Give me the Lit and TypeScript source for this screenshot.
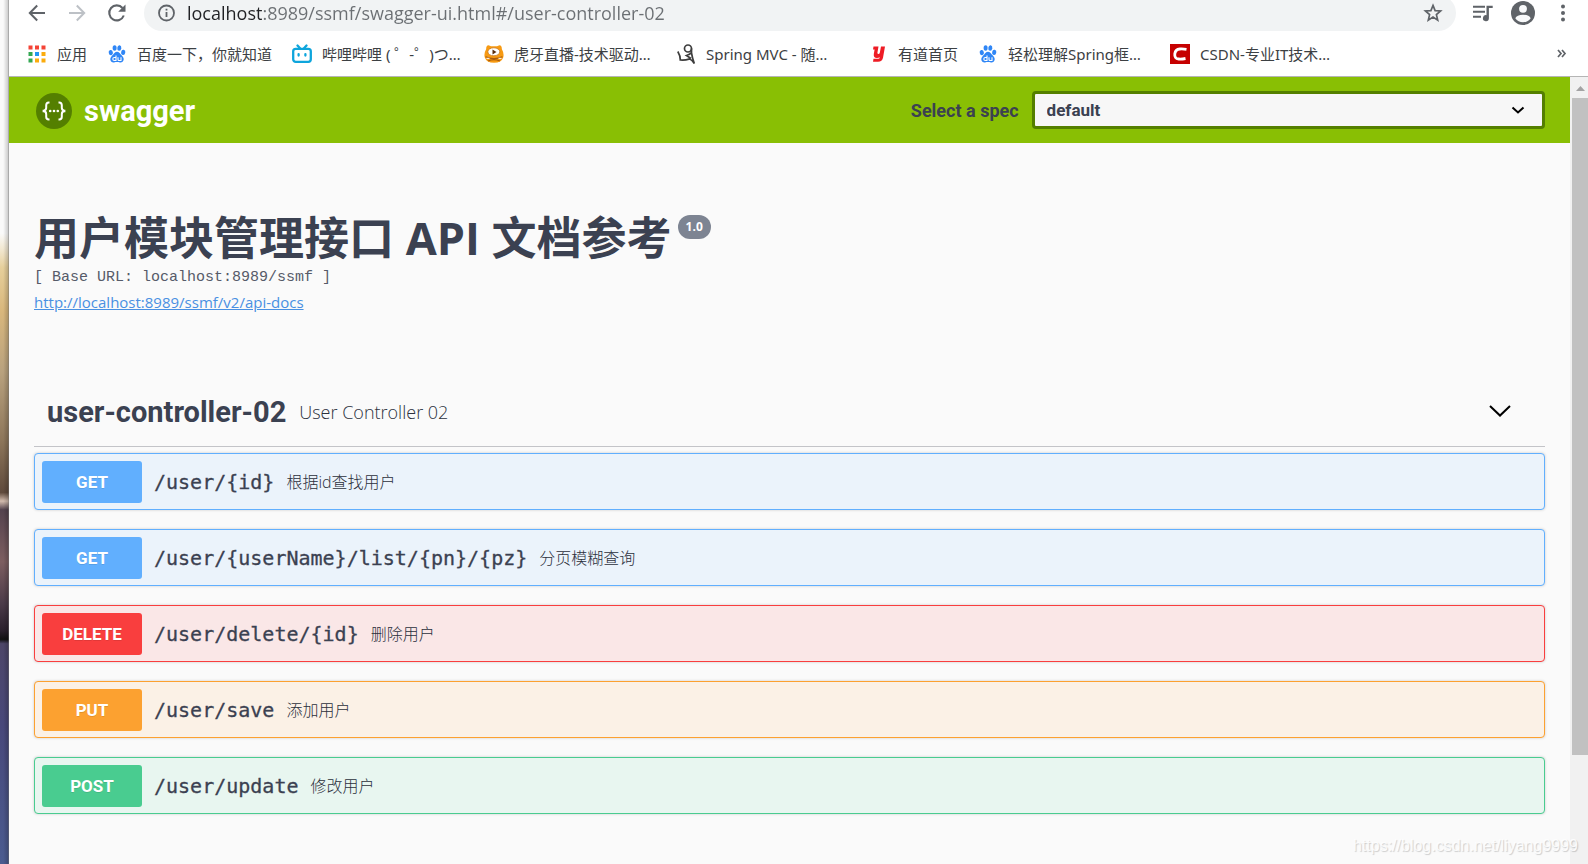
import { LitElement, html, css, svg } from "lit";
import { customElement, property } from "lit/decorators.js";
import { classMap } from "lit/directives/class-map.js";

interface Bookmark {
  label: string;
  icon: string;
  wide?: boolean;
}

interface Operation {
  method: string;
  path: string;
  summary: string;
}

const BOOKMARKS: Bookmark[] = [
  { label: "应用", icon: "apps" },
  { label: "百度一下，你就知道", icon: "baidu" },
  { label: "哔哩哔哩 ( ゜-゜)つ…", icon: "bilibili", wide: true },
  { label: "虎牙直播-技术驱动…", icon: "huya", wide: true },
  { label: "Spring MVC - 随…", icon: "spring", wide: true },
  { label: "有道首页", icon: "youdao" },
  { label: "轻松理解Spring框…", icon: "baidu", wide: true },
  { label: "CSDN-专业IT技术…", icon: "csdn", wide: true },
];

const OPERATIONS: Operation[] = [
  { method: "GET", path: "/user/{id}", summary: "根据id查找用户" },
  { method: "GET", path: "/user/{userName}/list/{pn}/{pz}", summary: "分页模糊查询" },
  { method: "DELETE", path: "/user/delete/{id}", summary: "删除用户" },
  { method: "PUT", path: "/user/save", summary: "添加用户" },
  { method: "POST", path: "/user/update", summary: "修改用户" },
];

const APP_COLORS = ["#f44336", "#f44336", "#f44336", "#34a853", "#2196f3", "#fbac0d", "#34a853", "#fbac0d", "#fbac0d"];

const GLYPHS: Record<string, unknown> = {
  apps: svg`${APP_COLORS.map(
    (c, i) => svg`<rect x=${1.5 + (i % 3) * 6.5} y=${1.5 + Math.floor(i / 3) * 6.5} width="4" height="4" fill=${c} />`
  )}`,
  baidu: svg`<g fill="#2f86f6">
      <ellipse cx="3.8" cy="8.6" rx="2.1" ry="2.7" transform="rotate(-12 3.8 8.6)" />
      <ellipse cx="7.6" cy="4" rx="2" ry="2.8" />
      <ellipse cx="12.3" cy="4" rx="2" ry="2.8" transform="rotate(8 12.3 4)" />
      <ellipse cx="16.2" cy="8.4" rx="2.1" ry="2.6" transform="rotate(12 16.2 8.4)" />
      <path d="M10 7.8c2 0 2.8 1.6 3.8 2.8 1.300 1.400 3.200 2.600 2.900 5-.3 2.200-2 3-3.700 2.800-1.200-.1-1.900-.3-3-.3s-1.800.200-3 .3c-1.700.200-3.500-.6-3.700-2.800-.2-2.400 1.700-3.600 2.900-5C7.200 9.400 8 7.800 10 7.800z" />
    </g>
    <path d="M9 11.500v5H7.300a1.500 1.500 0 0 1 0-3H9M11 13.200v2.300q0 1 1 1h2v-3.300" fill="none" stroke="#fff" stroke-width="1.100" />`,
  bilibili: svg`<g fill="none" stroke="#0ea5dc" stroke-width="2.300" stroke-linecap="round" stroke-linejoin="round">
      <rect x="1.200" y="4.800" width="17.600" height="13" rx="2.500" />
      <path d="M5.500 1.500 8 4.300M14.500 1.500 12 4.300" />
      <path d="M6.600 10.200v1.400M13.400 10.200v1.400" />
    </g>`,
  huya: svg`<path d="M2.200 5Q2 1.500 4.500 1.200L7 2.300h6l2.500-1.100Q18 1.500 17.800 5q2.600 4.500 1.400 8.500Q17.500 18.800 10 18.800T.8 13.500Q-.4 9.500 2.200 5z" fill="#f79a12" />
    <ellipse cx="9.800" cy="7.800" rx="6" ry="4" fill="#fff" stroke="#c8751a" stroke-width=".8" />
    <path d="m8.500 5.500 4 2.500-4 2.500z" fill="#5b2d0c" />
    <path d="M1.500 12.800q8.500 3.600 17 0M4 17q6-2.500 12 0" fill="none" stroke="#a85a0c" stroke-width="1.100" />
    <path d="M2.500 14.300h3M14.500 14.300h3" stroke="#fff" stroke-width="1" />`,
  spring: svg`<g fill="none" stroke="#3d3d3d" stroke-width="1.700">
      <circle cx="12" cy="4.500" r="3.500" />
      <path d="M15.500 4.500v4.500q.8 5 2.800 10.500-2-3-4.500-4.600-5.500 1.700-9.500 1.100Q4.500 12 1.800 7.500M15.500 8.500q-1.500 2-5 3l4.500 3" />
    </g>`,
  youdao: svg`<path d="M5.500 2.500h5l-1.100 6.300q0 1.200 1 1.200 1.100 0 1.400-1.200L13 2.500h4L15 13.800q-.8 4-5 4H5l.5-3.100h4.800q1.300 0 1.500-1.500-1 .8-2.900.8-3.600-.1-3.100-4L6.600 5.500H5z" fill="#ee1c25" />`,
  csdn: svg`<rect width="20" height="20" fill="#c60000" />
    <path d="M16.500 5.300Q13 4.800 9.800 5 5.400 5.400 4.800 9.800q-.6 4.800 3.900 5.200 3 .2 6.800-.5" fill="none" stroke="#fff" stroke-width="2.800" />`,
};

@customElement("bookmark-link")
class BookmarkLink extends LitElement {
  @property() label = "";
  @property() icon = "";

  static styles = css`
    :host { display: block; }
    .link {
      display: flex;
      align-items: center;
      gap: 10px;
      color: #3c4043;
      text-decoration: none;
      white-space: nowrap;
      font: 15px/20px "Noto Sans", "Noto Sans CJK SC", sans-serif;
    }
    .icon { width: 20px; height: 20px; flex: none; }
  `;

  render() {
    return html`<a class="link" href="#">
      <svg class="icon" viewBox="0 0 20 20" aria-hidden="true">${GLYPHS[this.icon]}</svg>
      <span>${this.label}</span>
    </a>`;
  }
}

@customElement("operation-row")
class OperationRow extends LitElement {
  @property() method = "";
  @property() path = "";
  @property() summary = "";

  static styles = css`
    :host { display: block; }
    .row {
      display: flex;
      align-items: center;
      gap: 12px;
      box-sizing: border-box;
      width: 100%;
      height: 57px;
      padding: 0 7px;
      border: 1px solid var(--tone);
      border-radius: 4px;
      background: var(--tint);
      box-shadow: 0 0 3px rgba(0, 0, 0, 0.19);
      color: #3b4151;
      text-align: left;
      cursor: pointer;
    }
    .get { --tone: #61affe; --tint: #ebf3fb; }
    .delete { --tone: #f93e3e; --tint: #fae7e7; }
    .put { --tone: #fca130; --tint: #fbf1e6; }
    .post { --tone: #49cc90; --tint: #e8f6f0; }
    .method {
      flex: none;
      width: 100px;
      border-radius: 3px;
      background: var(--tone);
      color: #fff;
      text-align: center;
      text-shadow: 0 1px 0 rgba(0, 0, 0, 0.1);
      font: 700 17px/42px Roboto, sans-serif;
    }
    .path { font: 20px/28px "DejaVu Sans Mono", monospace; -webkit-text-stroke: 0.3px; }
    .summary { color: #2b303c; font: 300 16px/24px "Open Sans", "Noto Sans CJK SC", sans-serif; }
  `;

  render() {
    const tone = { row: true, [this.method.toLowerCase()]: true };
    return html`<button class=${classMap(tone)} type="button">
      <span class="method">${this.method}</span>
      <span class="path">${this.path}</span>
      <span class="summary">${this.summary}</span>
    </button>`;
  }
}

@customElement("browser-chrome")
class BrowserChrome extends LitElement {
  static styles = css`
    :host { display: block; background: #fff; border-bottom: 1px solid #b5b5b5; }
    .toolbar {
      display: flex;
      align-items: center;
      height: 36px;
      margin-top: -5px;
      padding: 0 15px 0 18px;
    }
    .tool {
      display: flex;
      padding: 0;
      border: 0;
      background: none;
      color: #5f6368;
      cursor: pointer;
    }
    .nav { display: flex; gap: 20px; margin-right: 15px; }
    .dim { color: #bdc1c6; }
    .omnibox {
      display: flex;
      flex: 1;
      align-items: center;
      height: 36px;
      padding: 0 13px 0 12px;
      border-radius: 18px;
      background: #f1f3f4;
      color: #5f6368;
    }
    .address {
      flex: 1;
      min-width: 0;
      height: 28px;
      margin-left: 11px;
      padding: 0;
      border: 0;
      outline: 0;
      background: linear-gradient(90deg, #202124 76px, #6b6f73 76px);
      background-clip: text;
      -webkit-background-clip: text;
      color: transparent;
      font: 18px/28px "Open Sans", sans-serif;
    }
    .actions { display: flex; align-items: center; gap: 16px; margin-left: 15px; }
    .bookmarks {
      display: flex;
      align-items: center;
      gap: 20px;
      height: 45px;
      padding: 0 20px 0 18px;
    }
    .wide { width: 172px; }
    .more { margin-left: auto; }
  `;

  render() {
    return html`
      <div class="toolbar">
        <div class="nav">
          <button class="tool" aria-label="Back">
            <svg width="20" height="20" viewBox="0 0 20 20" fill="none" stroke="currentColor" stroke-width="2"><path d="M18 10H3M10.200 2.500 2.800 10l7.400 7.500" /></svg>
          </button>
          <button class="tool dim" aria-label="Forward">
            <svg width="20" height="20" viewBox="0 0 20 20" fill="none" stroke="currentColor" stroke-width="2"><path d="M2 10h15M9.800 2.500l7.400 7.500-7.400 7.500" /></svg>
          </button>
          <button class="tool" aria-label="Reload">
            <svg width="22" height="20" viewBox="0 0 22 20"><path d="M16.800 12.500A7.500 7.500 0 1 1 15.500 5" fill="none" stroke="currentColor" stroke-width="2.100" /><path d="M18.500 1.500v7.300h-7.300z" fill="currentColor" /></svg>
          </button>
        </div>
        <div class="omnibox">
          <svg width="20" height="20" viewBox="0 0 20 20"><circle cx="10.500" cy="10" r="7.500" fill="none" stroke="currentColor" stroke-width="1.800" /><path d="M9.600 9h1.800v5H9.600zM9.600 5.800h1.800v1.800H9.600z" fill="currentColor" /></svg>
          <input class="address" type="text" aria-label="Address" spellcheck="false" value="localhost:8989/ssmf/swagger-ui.html#/user-controller-02" />
          <button class="tool" aria-label="Bookmark this page">
            <svg width="20" height="20" viewBox="0 0 20 20"><path d="m10 2.400 2.100 5.200 5.500.4-4.200 3.600 1.300 5.500-4.700-3-4.700 3 1.300-5.500L2.400 8l5.500-.4z" fill="none" stroke="currentColor" stroke-width="1.700" /></svg>
          </button>
        </div>
        <div class="actions">
          <button class="tool" aria-label="Media controls">
            <svg width="24" height="20" viewBox="0 0 24 20"><path d="M2 3.800h12M2 8.800h12M2 13.800h8" stroke="currentColor" stroke-width="2" /><path d="M15.500 2.800h6.200v2.300h-3.800v10.100a3 3 0 1 1-2.400-3z" fill="currentColor" /></svg>
          </button>
          <button class="tool" aria-label="Profile">
            <svg width="24" height="24" viewBox="0 0 24 24"><circle cx="12" cy="12" r="12" fill="currentColor" /><circle cx="12" cy="7.800" r="3.900" fill="#f8f9fa" /><path d="M4.300 17.300q1.500-3.600 7.700-3.600t7.700 3.600a9.400 9.400 0 0 1-15.400 0z" fill="#f8f9fa" /></svg>
          </button>
          <button class="tool" aria-label="Menu">
            <svg width="22" height="20" viewBox="0 0 22 20" fill="currentColor"><circle cx="12" cy="3.500" r="2" /><circle cx="12" cy="10" r="2" /><circle cx="12" cy="16.500" r="2" /></svg>
          </button>
        </div>
      </div>
      <nav class="bookmarks" aria-label="Bookmarks">
        ${BOOKMARKS.map(
          (b) => html`<bookmark-link class=${classMap({ wide: !!b.wide })} .label=${b.label} .icon=${b.icon}></bookmark-link>`
        )}
        <button class="tool more" aria-label="More bookmarks">
          <svg width="12" height="10" viewBox="0 0 12 10" fill="none" stroke="currentColor" stroke-width="1.700"><path d="M2 1 5 4.500 2 8M6 1l3 3.500L6 8" /></svg>
        </button>
      </nav>
    `;
  }
}

@customElement("app-root")
class AppRoot extends LitElement {
  static styles = css`
    :host {
      display: grid;
      position: relative;
      grid-template-columns: 9px minmax(0, 1fr);
      height: 100vh;
      overflow: hidden;
      color: #3b4151;
      font-family: "Open Sans", "Noto Sans CJK SC", sans-serif;
    }
    .desktop {
      box-sizing: border-box;
      border-right: 1px solid rgba(90, 90, 90, 0.5);
      background:
        linear-gradient(90deg, transparent 40%, rgba(0, 0, 0, 0.18)),
        linear-gradient(#fafafa 0 27%, #f1e6cd 29%, #e6cf9b 31%, #d9b77c 36%, #b9a27e 43%, #8d765a 51%, #5f4a3c 57%,
          #d3bcae 58%, #54434e 59%, #7d5e60 65%, #4a3a48 70%, #2a202c 73%, #111 74%, #4d4668 74.500%, #48487a 84%, #4b5c90);
    }
    .window { display: flex; flex-direction: column; min-height: 0; }
    .viewport { display: flex; flex: 1; min-height: 0; }
    .page { flex: 1; min-width: 0; overflow: hidden; background: #fafafa; }
    .topbar {
      display: flex;
      align-items: center;
      height: 66px;
      padding: 2px 25px 0 26px;
      box-sizing: border-box;
      background: #89bf04;
    }
    .brand {
      display: flex;
      align-items: center;
      gap: 11px;
      margin-right: auto;
      color: #fff;
      text-decoration: none;
      font: 700 29px/36px Roboto, sans-serif;
    }
    .logo { width: 38px; height: 38px; }
    .speclabel { margin-right: 13px; font: 700 18px/24px Roboto, sans-serif; }
    .picker { display: grid; align-items: center; width: 34%; margin-bottom: 2px; }
    .picker > * { grid-area: 1 / 1; }
    .spec {
      appearance: none;
      box-sizing: border-box;
      width: 100%;
      height: 38px;
      padding: 0 40px 0 12px;
      border: 3px solid #547f00;
      border-radius: 4px;
      background: #f7f7f7;
      color: #3b4151;
      font: 700 17px/24px Roboto, sans-serif;
    }
    .caret { justify-self: end; margin-right: 20px; pointer-events: none; }
    .content { padding: 68px 25px 0; }
    .title {
      display: flex;
      align-items: flex-start;
      gap: 6px;
      margin: 0;
      font: 700 45px/54px "Open Sans", "Noto Sans CJK SC", sans-serif;
    }
    .version {
      margin-top: 4px;
      padding: 0 8px;
      border-radius: 12px;
      background: #7d8492;
      color: #fff;
      font: 700 12px/24px "Open Sans", sans-serif;
    }
    .base { margin: 0; color: #565b69; font: 15px/26px "Liberation Mono", monospace; }
    .docs { display: inline-block; color: #4990e2; font-size: 15px; line-height: 22px; }
    .tag {
      display: flex;
      align-items: center;
      gap: 13px;
      box-sizing: border-box;
      height: 70px;
      margin: 64px 0 6px;
      padding: 0 33px 0 13px;
      border-bottom: 1px solid #c3c4c8;
    }
    .tagname { margin: 0; font: 700 29px/36px Roboto, sans-serif; }
    .tagnote { margin: 0 auto 0 0; color: #2b303c; font-size: 18px; font-weight: 300; line-height: 24px; }
    .toggle { display: flex; padding: 0; border: 0; background: none; cursor: pointer; }
    .operations { display: flex; flex-direction: column; gap: 19px; }
    .scrollbar {
      display: flex;
      flex-direction: column;
      width: 16px;
      padding-left: 2px;
      background: #f1f1f1;
    }
    .arrow { height: 21px; flex: none; }
    .thumb { flex: 6; background: #c1c1c1; }
    .rest { flex: 1; }
    .watermark {
      position: absolute;
      right: 10px;
      bottom: 8px;
      color: rgba(255, 255, 255, 0.85);
      text-shadow: 1px 1px 1px rgba(0, 0, 0, 0.18);
      font: 16px/20px "Liberation Sans", sans-serif;
      pointer-events: none;
    }
  `;

  render() {
    return html`
      <div class="desktop"></div>
      <div class="window">
        <browser-chrome></browser-chrome>
        <div class="viewport">
          <main class="page">
            <header class="topbar">
              <a class="brand" href="#">
                <svg class="logo" viewBox="0 0 38 38" aria-hidden="true">
                  <circle cx="19" cy="19" r="18" fill="#547f00" />
                  <path d="M14.500 10.500h-.7q-2.600 0-2.600 2.800v2.500q0 2.700-2.600 2.900v.6q2.600.2 2.600 2.900v2.500q0 2.800 2.600 2.800h.7M23.500 10.500h.7q2.600 0 2.600 2.800v2.500q0 2.700 2.600 2.900v.6q-2.600.2-2.600 2.900v2.500q0 2.800-2.600 2.800h-.7" fill="none" stroke="#fff" stroke-width="2" />
                  <g fill="#fff"><circle cx="15.200" cy="19" r="1.300" /><circle cx="19" cy="19" r="1.300" /><circle cx="22.800" cy="19" r="1.300" /></g>
                </svg>
                <span>swagger</span>
              </a>
              <label class="speclabel" for="spec">Select a spec</label>
              <div class="picker">
                <select class="spec" id="spec"><option>default</option></select>
                <svg class="caret" width="14" height="10" viewBox="0 0 14 10" fill="none" stroke="#000" stroke-width="2"><path d="m1.500 2.500 5.500 5 5.500-5" /></svg>
              </div>
            </header>
            <div class="content">
              <h1 class="title"><span>用户模块管理接口 API 文档参考</span><small class="version">1.0</small></h1>
              <p class="base">[ Base URL: localhost:8989/ssmf ]</p>
              <a class="docs" href="#">http://localhost:8989/ssmf/v2/api-docs</a>
              <section>
                <div class="tag">
                  <h2 class="tagname">user-controller-02</h2>
                  <p class="tagnote">User Controller 02</p>
                  <button class="toggle" aria-label="Collapse section">
                    <svg width="24" height="14" viewBox="0 0 24 14" fill="none" stroke="#000" stroke-width="2"><path d="m2 1 10 9.500L22 1" /></svg>
                  </button>
                </div>
                <div class="operations">
                  ${OPERATIONS.map(
                    (o) => html`<operation-row .method=${o.method} .path=${o.path} .summary=${o.summary}></operation-row>`
                  )}
                </div>
              </section>
            </div>
          </main>
          <div class="scrollbar" aria-hidden="true">
            <svg class="arrow" viewBox="0 0 16 21"><path d="M4 14 8.500 9l4.500 5z" fill="#a3a3a3" /></svg>
            <div class="thumb"></div>
            <div class="rest"></div>
          </div>
        </div>
      </div>
      <div class="watermark">https://blog.csdn.net/liyang9999</div>
    `;
  }
}
